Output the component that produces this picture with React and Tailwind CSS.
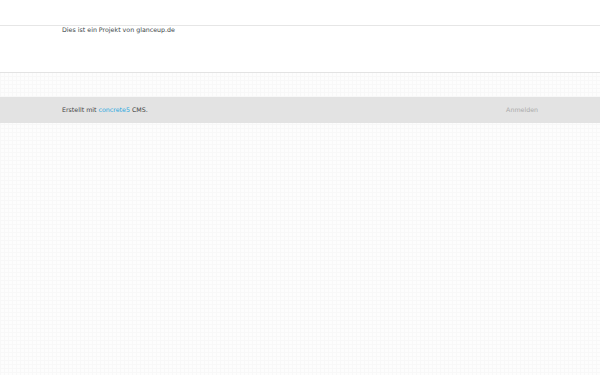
const App = () => {
  return (
    <div className="min-h-screen bg-[#fdfdfd] bg-[linear-gradient(#f8f8f8_1px,transparent_1px),linear-gradient(90deg,#f8f8f8_1px,transparent_1px)] bg-[size:4px_4px] font-['DejaVu_Sans',sans-serif] text-[6.3px]">
      {/* Header */}
      <header className="h-[26px] bg-white border-b border-[#e6e6e6]" />

      {/* Main content */}
      <main className="h-[47px] bg-white border-b border-[#e3e3e3]">
        <div className="w-[476px] mx-auto pt-[1px] leading-[6px] text-[#3a3f47]">
          Dies ist ein Projekt von glanceup.de
        </div>
      </main>

      {/* Footer */}
      <footer className="mt-[24px] h-[26px] bg-[#e3e3e3]">
        <div className="w-[476px] mx-auto h-full flex items-center justify-between">
          <span className="text-[#444444]">
            Erstellt mit <span className="text-[#29a8e0]">concrete5</span> CMS.
          </span>
          <span className="text-[#aaaaaa]">Anmelden</span>
        </div>
      </footer>
    </div>
  );
};

export default App;
